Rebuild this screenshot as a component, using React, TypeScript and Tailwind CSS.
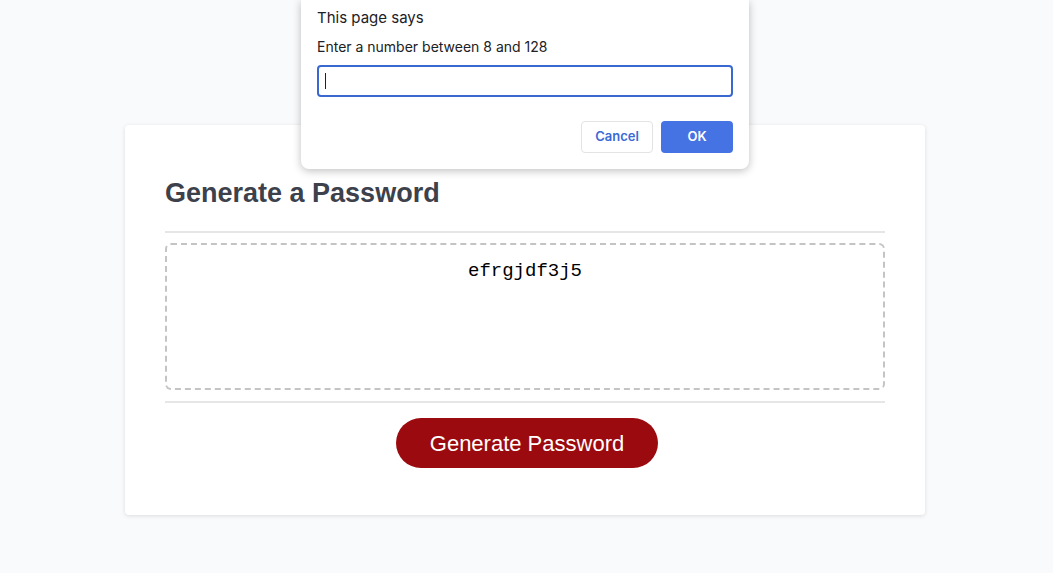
import React from 'react';

const PromptDialog = () => {
  return (
    <div className="absolute left-[301px] top-0 w-[448px] rounded-b-lg bg-white px-4 pt-[8px] pb-4 shadow-[0_2px_8px_rgba(0,0,0,0.25)] font-['Inter','Noto_Sans',sans-serif]">
      <div className="text-[15px] leading-5 text-[#202124]">This page says</div>
      <div className="mt-[10px] text-[14px] leading-[18px] text-[#202124]">Enter a number between 8 and 128</div>
      <div className="mt-[9px] flex h-8 items-center rounded border-2 border-[#3a68d1] px-[6px]">
        <span className="h-4 w-px bg-[#202124]" />
      </div>
      <div className="mt-6 flex justify-end gap-2">
        <button className="h-8 w-[72px] rounded border border-[#e3e3e3] bg-white text-[13px] font-semibold text-[#3b6ad6]">
          Cancel
        </button>
        <button className="h-8 w-[72px] rounded bg-[#4573e3] text-[13px] font-semibold text-white">
          OK
        </button>
      </div>
    </div>
  );
};

const App = () => {
  return (
    <div className="relative min-h-[573px] bg-[#f9fafb] pt-[125px] font-['Liberation_Sans',Arial,sans-serif]">
      <div className="ml-[125px] w-[800px] rounded bg-white px-10 pt-[52px] pb-[47px] shadow-[0_1px_4px_rgba(0,0,0,0.12)]">
        <h1 className="text-[27px] font-bold leading-8 text-[#3c414b]">Generate a Password</h1>
        <div className="mt-[22px] h-[2px] bg-[#e6e6e6]" />
        <div className="mt-[10px] h-[147px] rounded-md border-2 border-dashed border-[#c4c4c4] pt-[14px] text-center font-['Liberation_Mono','Courier_New',monospace] text-[19px] leading-6 text-black">
          efrgjdf3j5
        </div>
        <div className="mt-[11px] h-[2px] bg-[#e6e6e6]" />
        <div className="mt-[15px] flex justify-center pl-1">
          <button className="h-[50px] w-[262px] rounded-full bg-[#9b0a0e] text-[22px] text-white">
            Generate Password
          </button>
        </div>
      </div>
      <PromptDialog />
    </div>
  );
};

export default App;
